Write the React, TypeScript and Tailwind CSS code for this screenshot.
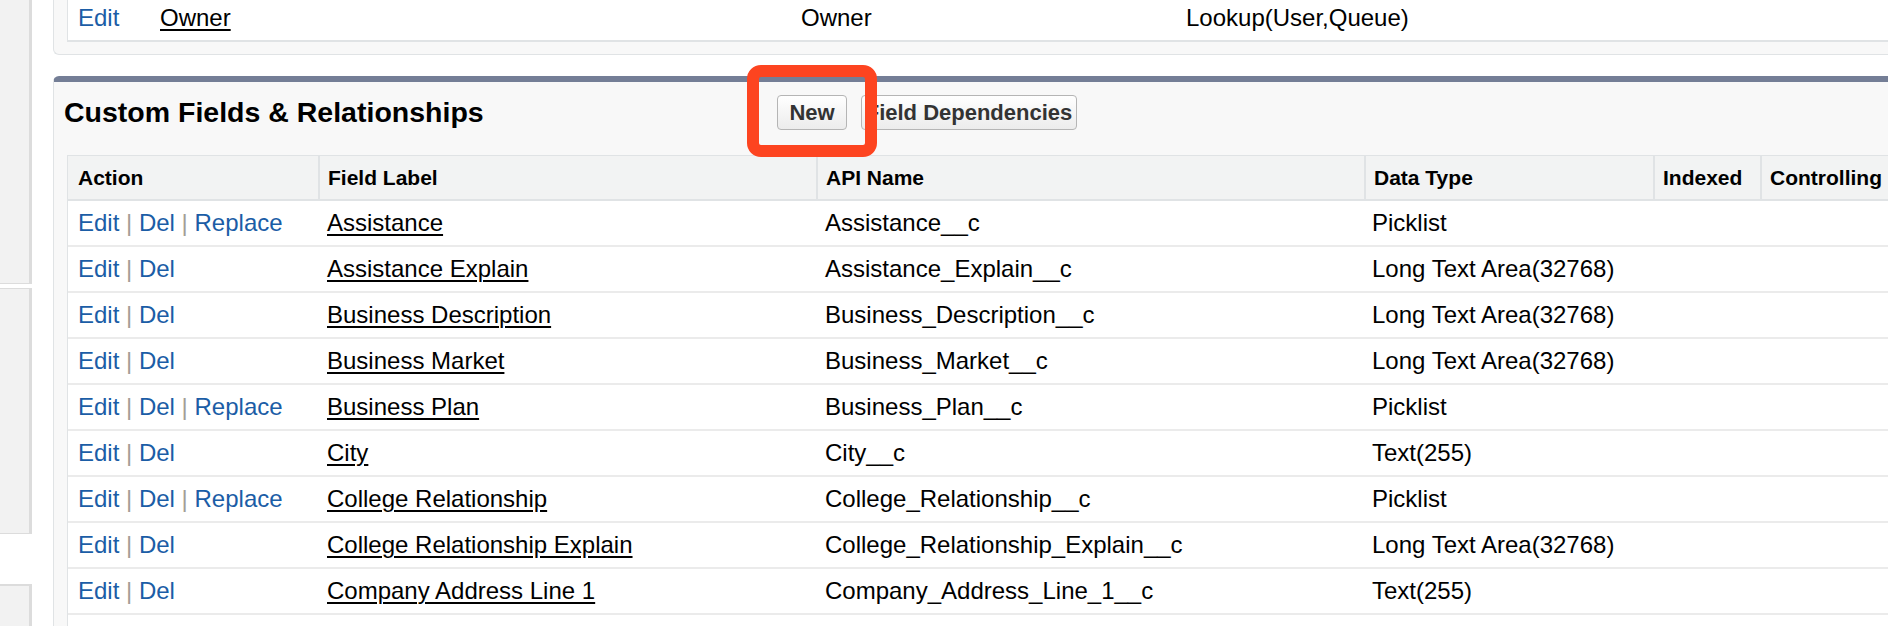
import React from "react";

const rows = [
  { replace: true, label: "Assistance", api: "Assistance__c", type: "Picklist" },
  { replace: false, label: "Assistance Explain", api: "Assistance_Explain__c", type: "Long Text Area(32768)" },
  { replace: false, label: "Business Description", api: "Business_Description__c", type: "Long Text Area(32768)" },
  { replace: false, label: "Business Market", api: "Business_Market__c", type: "Long Text Area(32768)" },
  { replace: true, label: "Business Plan", api: "Business_Plan__c", type: "Picklist" },
  { replace: false, label: "City", api: "City__c", type: "Text(255)" },
  { replace: true, label: "College Relationship", api: "College_Relationship__c", type: "Picklist" },
  { replace: false, label: "College Relationship Explain", api: "College_Relationship_Explain__c", type: "Long Text Area(32768)" },
  { replace: false, label: "Company Address Line 1", api: "Company_Address_Line_1__c", type: "Text(255)" },
];

const cols = "grid grid-cols-[250px_498px_548px_289px_107px_1fr]";

function Sep() {
  return <span className="text-[#a39e96]"> | </span>;
}

function Actions({ replace }: { replace: boolean }) {
  return (
    <span className="text-[#1b5da6]">
      <a>Edit</a>
      <Sep />
      <a>Del</a>
      {replace && (
        <>
          <Sep />
          <a>Replace</a>
        </>
      )}
    </span>
  );
}

export default function App() {
  return (
    <div className="relative flex w-[1888px] h-[626px] overflow-hidden bg-white font-['Liberation_Sans',Arial,sans-serif] text-black">
      {/* left nav strip */}
      <div className="flex flex-col w-[32px] shrink-0">
        <div className="h-[284px] bg-[#f2f2f2] border-r-[3px] border-b border-[#dcdcdc]" />
        <div className="h-[4px]" />
        <div className="h-[246px] bg-[#f2f2f2] border-r-[3px] border-b border-t border-[#dcdcdc]" />
        <div className="h-[50px]" />
        <div className="flex-1 bg-[#f2f2f2] border-r-[3px] border-t-2 border-[#dcdcdc]" />
      </div>

      <div className="ml-[21px] flex-1 min-w-0 flex flex-col">
        {/* standard fields panel (bottom edge) */}
        <div className="-mt-[5px] bg-[#f8f8f8] border-l border-b border-[#e0e3e5] rounded-bl-[6px] pl-[13px] pb-[12px]">
          <div className="grid grid-cols-[83px_641px_385px_1fr] h-[47px] items-center bg-white border-l border-b-2 border-[#e0e3e5] text-[24px]">
            <div className="pl-[10px] text-[#1b5da6]">Edit</div>
            <div className="pl-[9px]">
              <a className="underline decoration-2 underline-offset-[3px]">Owner</a>
            </div>
            <div className="pl-[9px]">Owner</div>
            <div className="pl-[9px]">Lookup(User,Queue)</div>
          </div>
        </div>

        {/* custom fields panel */}
        <div className="mt-[21px] flex-1 bg-[#f8f8f8] border-t-[6px] border-t-[#747e96] border-l border-l-[#e0e3e5] rounded-tl-[6px]">
          <div className="flex items-center h-[60px]">
            <h2 className="w-[723px] pl-[10px] text-[28.5px] font-bold">Custom Fields &amp; Relationships</h2>
            <div className="flex gap-[14px]">
              <button className="w-[70px] h-[35px] rounded-[4px] border border-[#b5b5b5] bg-gradient-to-b from-white to-[#ececec] text-[22px] font-bold text-[#333]">
                New
              </button>
              <button className="w-[216px] h-[35px] rounded-[4px] border border-[#b5b5b5] bg-gradient-to-b from-white to-[#ececec] text-[22px] font-bold text-[#333]">
                Field Dependencies
              </button>
            </div>
          </div>

          <div className="mt-[13px] ml-[13px] border-t border-l border-[#e0e3e5] bg-white">
            <div className={`${cols} h-[45px] items-stretch bg-[#f2f3f3] border-b-2 border-[#e0e3e5] text-[21px] font-bold`}>
              <div className="flex items-center pl-[10px]">Action</div>
              <div className="flex items-center pl-[8px] border-l-2 border-[#e0e3e5]">Field Label</div>
              <div className="flex items-center pl-[8px] border-l-2 border-[#e0e3e5]">API Name</div>
              <div className="flex items-center pl-[8px] border-l-2 border-[#e0e3e5]">Data Type</div>
              <div className="flex items-center pl-[8px] border-l-2 border-[#e0e3e5]">Indexed</div>
              <div className="flex items-center pl-[8px] border-l-2 border-[#e0e3e5]">Controlling</div>
            </div>
            {rows.map((r, i) => (
              <div key={i} className={`${cols} h-[46px] items-center border-b-2 border-[#ebebeb] text-[24px]`}>
                <div className="pl-[10px] whitespace-nowrap">
                  <Actions replace={r.replace} />
                </div>
                <div className="pl-[9px]">
                  <a className="underline decoration-2 underline-offset-[3px]">{r.label}</a>
                </div>
                <div className="pl-[9px]">{r.api}</div>
                <div className="pl-[8px]">{r.type}</div>
                <div />
                <div />
              </div>
            ))}
            <div className="h-[46px]" />
          </div>
        </div>
      </div>

      {/* highlight annotation */}
      <div className="absolute left-[747px] top-[65px] w-[130px] h-[92px] border-[12px] border-[#fd4420] rounded-[14px] pointer-events-none" />
    </div>
  );
}
